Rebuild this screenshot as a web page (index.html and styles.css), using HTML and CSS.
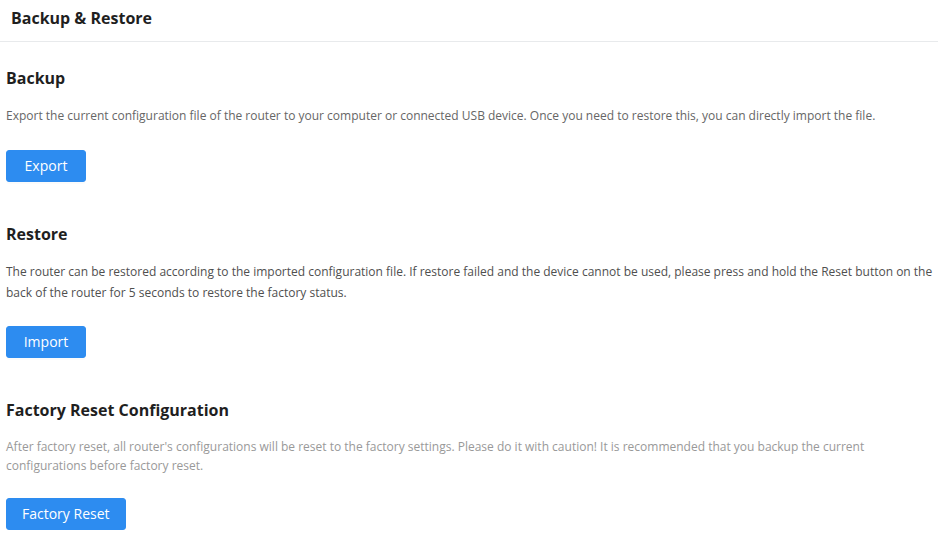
FILE: index.html
```html
<!DOCTYPE html>
<html>
<head>
<meta charset="utf-8">
<link rel="stylesheet" href="styles.css">
</head>
<body>
<div class="page">
  <div class="page-header">Backup &amp; Restore</div>
  <div class="content">
    <section class="block first">
      <h2 class="block-title">Backup</h2>
      <p class="block-desc">Export the current configuration file of the router to your computer or connected USB device. Once you need to restore this, you can directly import the file.</p>
      <button class="btn">Export</button>
    </section>
    <section class="block">
      <h2 class="block-title">Restore</h2>
      <p class="block-desc desc-tall">The router can be restored according to the imported configuration file. If restore failed and the device cannot be used, please press and hold the Reset button on the back of the router for 5 seconds to restore the factory status.</p>
      <button class="btn">Import</button>
    </section>
    <section class="block">
      <h2 class="block-title">Factory Reset Configuration</h2>
      <p class="block-desc desc-light">After factory reset, all router's configurations will be reset to the factory settings. Please do it with caution! It is recommended that you backup the current configurations before factory reset.</p>
      <button class="btn">Factory Reset</button>
    </section>
  </div>
</div>
</body>
</html>
```
FILE: styles.css
```css
* { box-sizing: border-box; }
html, body { margin: 0; padding: 0; background: #fff; }
body { font-family: "Open Sans", "Noto Sans", sans-serif; color: #222; }
.page { width: 938px; }
.page-header {
  height: 42px;
  line-height: 36px;
  padding-left: 11px;
  font-size: 16px;
  font-weight: 700;
  color: #1f1f1f;
  border-bottom: 1px solid #e8eaec;
}
.content { padding: 0 4px 0 6px; }
.block { padding-top: 41px; }
.block.first { padding-top: 25px; }
.block-title {
  margin: 0;
  font-size: 16px;
  line-height: 22px;
  font-weight: 700;
  color: #1f1f1f;
}
.block-desc {
  margin: 17px 0 0;
  font-size: 12px;
  line-height: 20px;
  color: #666;
}
.desc-tall { line-height: 21px; margin-top: 16px; color: #4f4f4f; }
.desc-light { color: #999; line-height: 19px; margin-top: 16px; }
.btn {
  display: block;
  margin-top: 24px;
  min-width: 80px;
  height: 32px;
  padding: 0 15px 1px;
  font-family: inherit;
  font-size: 14px;
  color: #fff;
  background: #2d8cf0;
  border: 1px solid #2d8cf0;
  border-radius: 3px;
  box-shadow: 0 2px 0 rgba(0,0,0,0.015);
}
.desc-tall + .btn { margin-top: 23px; }
.desc-light + .btn { margin-top: 23px; }
```
